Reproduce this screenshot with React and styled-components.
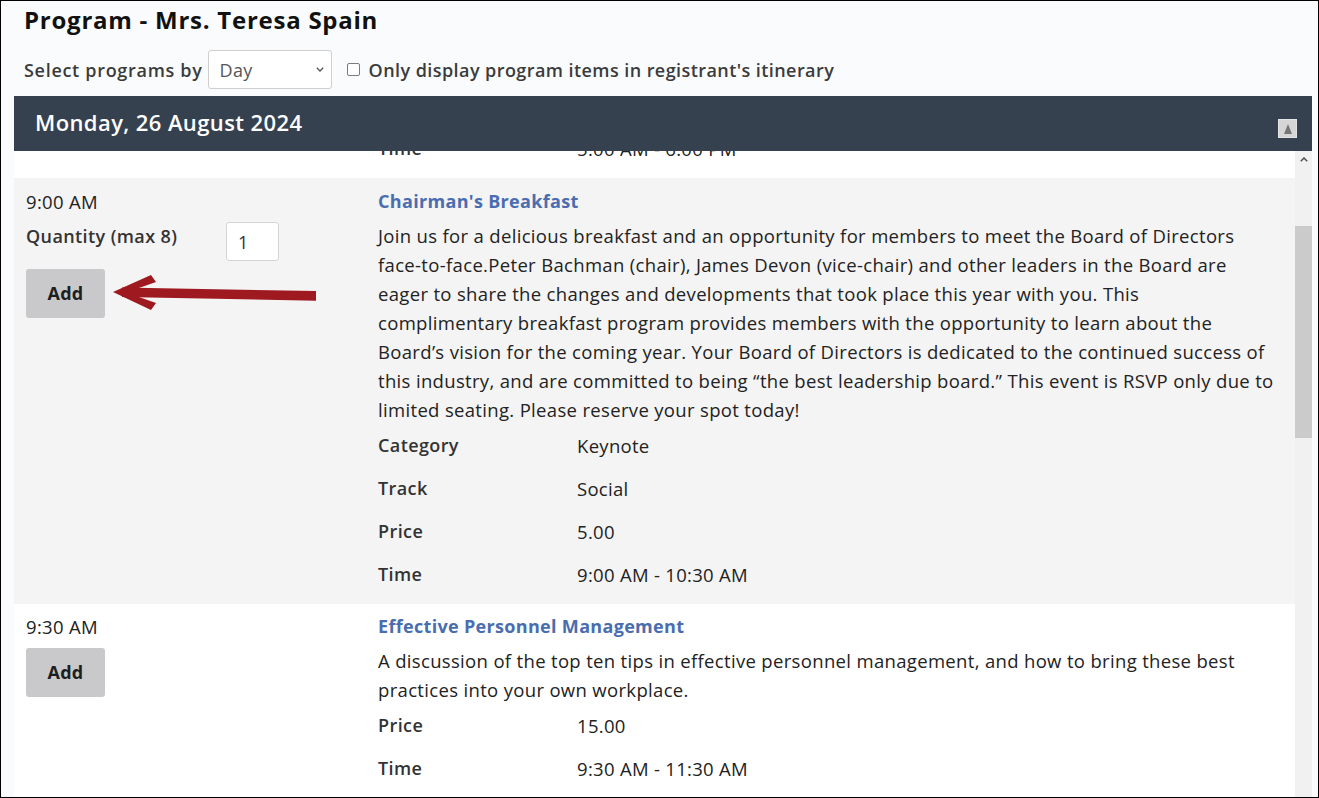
import React from 'react';
import styled, { createGlobalStyle } from 'styled-components';

const GlobalStyle = createGlobalStyle`
  html, body { margin: 0; padding: 0; }
  body { font-family: "Open Sans", "Noto Sans", sans-serif; color: #222; background: #fff; }
  *, *::before, *::after { box-sizing: border-box; }
`;

const Frame = styled.div`
  width: 1319px;
  height: 798px;
  border: 1px solid #000;
  background: #fafbfd;
  padding: 4px 6px 0 13px;
  display: flex;
  flex-direction: column;
  overflow: hidden;
`;

const PageTitle = styled.h1`
  margin: 0 0 0 10px;
  font-size: 24px;
  line-height: 30px;
  font-weight: 700;
  letter-spacing: 0.75px;
  color: #111;
`;

const Toolbar = styled.div`
  display: flex;
  align-items: center;
  height: 39px;
  margin-top: 15px;
  padding-left: 10px;
`;

const ToolLabel = styled.span`
  font-size: 18px;
  font-weight: 600;
  letter-spacing: 0.7px;
  color: #3b3b3b;
  margin-right: 5px;
`;

const SelectWrap = styled.div`
  position: relative;
  width: 124px;
  height: 39px;
`;

const Select = styled.select`
  appearance: none;
  -webkit-appearance: none;
  width: 100%;
  height: 100%;
  border: 1px solid #cfcfcf;
  border-radius: 3px;
  background: #fff;
  padding: 0 11px;
  font-family: "Open Sans", sans-serif;
  font-size: 18px;
  letter-spacing: 0.3px;
  color: #555;
`;

const SelectChevron = styled.svg`
  position: absolute;
  right: 8px;
  top: 17px;
  pointer-events: none;
`;

const CheckLabel = styled.label`
  display: flex;
  align-items: center;
  gap: 9px;
  margin-left: 15px;
  font-size: 18px;
  font-weight: 600;
  letter-spacing: 0.43px;
  color: #3b3b3b;
`;

const CheckBox = styled.span`
  width: 13px;
  height: 13px;
  border: 1.5px solid #7a7a80;
  border-radius: 2px;
  background: #fff;
`;

const DayHeader = styled.div`
  margin-top: 7px;
  height: 55px;
  background: #364150;
  display: flex;
  justify-content: space-between;
  align-items: center;
  padding-left: 21px;
`;

const DayTitle = styled.h2`
  margin: 0;
  padding-bottom: 3px;
  font-size: 22px;
  line-height: 30px;
  font-weight: 600;
  letter-spacing: 0.4px;
  color: #fff;
`;

const CollapseButton = styled.button`
  align-self: flex-end;
  margin: 0 15px 13px 0;
  width: 19px;
  height: 19px;
  padding: 0;
  border: 1px solid #e4e4e4;
  background: #d6d6d6;
  display: flex;
  align-items: center;
  justify-content: center;
`;

const ScrollArea = styled.div`
  flex: 1;
  min-height: 0;
  display: flex;
`;

const List = styled.div`
  flex: 1;
  min-width: 0;
  overflow: hidden;
  background: #fff;
`;

const ListContent = styled.div`
  margin-top: ${p => -p.$offset}px;
`;

const ScrollTrack = styled.div`
  width: 17px;
  background: #f1f1f1;
  display: flex;
  flex-direction: column;
  align-items: center;
`;

const ScrollArrow = styled.div`
  height: 17px;
  width: 100%;
  display: flex;
  align-items: center;
  justify-content: center;
`;

const ScrollThumb = styled.div`
  width: 100%;
  height: 212px;
  margin-top: 58px;
  background: #cbcbcb;
`;

const ItemRow = styled.div`
  position: relative;
  display: grid;
  grid-template-columns: 352px 1fr;
  padding: 9.5px 10px 8px 12px;
  background: ${p => (p.$alt ? '#f4f4f4' : '#fff')};
`;

const LeftCol = styled.div`
  display: flex;
  flex-direction: column;
  align-items: flex-start;
  gap: 7.5px;
`;

const TimeText = styled.div`
  font-size: 18.5px;
  line-height: 27px;
  letter-spacing: 0.3px;
  color: #222;
`;

const QuantityRow = styled.div`
  display: flex;
  align-items: flex-start;
`;

const QuantityLabel = styled.span`
  width: 200px;
  margin-top: 1px;
  font-size: 18px;
  line-height: 27px;
  font-weight: 600;
  letter-spacing: 0.4px;
  color: #333;
`;

const QuantityInput = styled.input`
  width: 53px;
  height: 39px;
  border: 1px solid #d4d4d4;
  border-radius: 3px;
  background: #fff;
  padding: 0 11px;
  font-family: "Open Sans", sans-serif;
  font-size: 18px;
  color: #333;
`;

const AddButton = styled.button`
  width: 79px;
  height: 49px;
  border: none;
  border-radius: 3px;
  background: #c9c9cb;
  font-family: "Open Sans", sans-serif;
  font-size: 18px;
  font-weight: 700;
  letter-spacing: 0.3px;
  color: #1e1e1e;
`;

const RightCol = styled.div`
  min-width: 0;
`;

const ItemTitle = styled.a`
  display: block;
  font-size: 18px;
  line-height: 27px;
  font-weight: 700;
  letter-spacing: 0.32px;
  color: #4a6db0;
  text-decoration: none;
`;

const Description = styled.p`
  margin: 6px 0 0;
  font-size: 18.5px;
  line-height: 29px;
  letter-spacing: 0.33px;
  color: #222;
`;

const DescLine = styled.span`
  display: block;
  white-space: nowrap;
`;

const DetailRow = styled.div`
  display: grid;
  grid-template-columns: 199px 1fr;
  height: 43px;
  line-height: 43px;
`;

const DetailLabel = styled.span`
  font-size: 18px;
  font-weight: 600;
  letter-spacing: 0.4px;
  color: #333;
`;

const DetailValue = styled.span`
  font-size: 18.5px;
  letter-spacing: 0.3px;
  color: #222;
`;

const Annotation = styled.svg`
  position: absolute;
  left: 96px;
  top: 94px;
  pointer-events: none;
`;

const items = [
  {
    partial: true,
    details: [['Time', '5:00 AM - 6:00 PM']],
  },
  {
    time: '9:00 AM',
    quantity: 'Quantity (max 8)',
    title: "Chairman's Breakfast",
    description: [
      'Join us for a delicious breakfast and an opportunity for members to meet the Board of Directors',
      'face-to-face.Peter Bachman (chair), James Devon (vice-chair) and other leaders in the Board are',
      'eager to share the changes and developments that took place this year with you. This',
      'complimentary breakfast program provides members with the opportunity to learn about the',
      'Board\u2019s vision for the coming year. Your Board of Directors is dedicated to the continued success of',
      'this industry, and are committed to being \u201cthe best leadership board.\u201d This event is RSVP only due to',
      'limited seating. Please reserve your spot today!',
    ],
    details: [
      ['Category', 'Keynote'],
      ['Track', 'Social'],
      ['Price', '5.00'],
      ['Time', '9:00 AM - 10:30 AM'],
    ],
    alt: true,
    arrow: true,
  },
  {
    time: '9:30 AM',
    title: 'Effective Personnel Management',
    description: [
      'A discussion of the top ten tips in effective personnel management, and how to bring these best',
      'practices into your own workplace.',
    ],
    details: [
      ['Price', '15.00'],
      ['Time', '9:30 AM - 11:30 AM'],
    ],
  },
];

function Arrow() {
  return (
    <Annotation width="210" height="42" viewBox="0 0 210 42">
      <polygon points="3,20 41,3 46,10 16,20.5 46,31 41,38" fill="#9f1921" />
      <polygon points="12,15.5 206,19 206,28.7 12,25" fill="#9f1921" />
    </Annotation>
  );
}

function Item({ item }) {
  return (
    <ItemRow $alt={item.alt}>
      <LeftCol>
        {item.time && <TimeText>{item.time}</TimeText>}
        {item.quantity && (
          <QuantityRow>
            <QuantityLabel>{item.quantity}</QuantityLabel>
            <QuantityInput defaultValue="1" />
          </QuantityRow>
        )}
        {!item.partial && <AddButton>Add</AddButton>}
      </LeftCol>
      <RightCol>
        {item.title && <ItemTitle href="#">{item.title}</ItemTitle>}
        {item.description && (
          <Description>
            {item.description.map((line, i) => (
              <DescLine key={i}>{line}</DescLine>
            ))}
          </Description>
        )}
        {item.details.map(([k, v]) => (
          <DetailRow key={k}>
            <DetailLabel>{k}</DetailLabel>
            <DetailValue>{v}</DetailValue>
          </DetailRow>
        ))}
      </RightCol>
      {item.arrow && <Arrow />}
    </ItemRow>
  );
}

export default function App() {
  return (
    <>
      <GlobalStyle />
      <Frame>
        <PageTitle>Program - Mrs. Teresa Spain</PageTitle>
        <Toolbar>
          <ToolLabel>Select programs by</ToolLabel>
          <SelectWrap>
            <Select defaultValue="Day">
              <option>Day</option>
              <option>Track</option>
              <option>Category</option>
            </Select>
            <SelectChevron width="8" height="5" viewBox="0 0 8 5">
              <path d="M0.8 0.8 L4 4 L7.2 0.8" fill="none" stroke="#555" strokeWidth="1.3" />
            </SelectChevron>
          </SelectWrap>
          <CheckLabel>
            <CheckBox />
            Only display program items in registrant's itinerary
          </CheckLabel>
        </Toolbar>
        <DayHeader>
          <DayTitle>Monday, 26 August 2024</DayTitle>
          <CollapseButton aria-label="Collapse">
            <svg width="8" height="10" viewBox="0 0 8 10">
              <polygon points="4,0 8,10 0,10" fill="#777" />
            </svg>
          </CollapseButton>
        </DayHeader>
        <ScrollArea>
          <List>
            <ListContent $offset={33.5}>
              {items.map((it, i) => (
                <Item key={i} item={it} />
              ))}
            </ListContent>
          </List>
          <ScrollTrack>
            <ScrollArrow>
              <svg width="8" height="5" viewBox="0 0 8 5">
                <path d="M0.8 4.2 L4 1 L7.2 4.2" fill="none" stroke="#505050" strokeWidth="1.5" />
              </svg>
            </ScrollArrow>
            <ScrollThumb />
          </ScrollTrack>
        </ScrollArea>
      </Frame>
    </>
  );
}
